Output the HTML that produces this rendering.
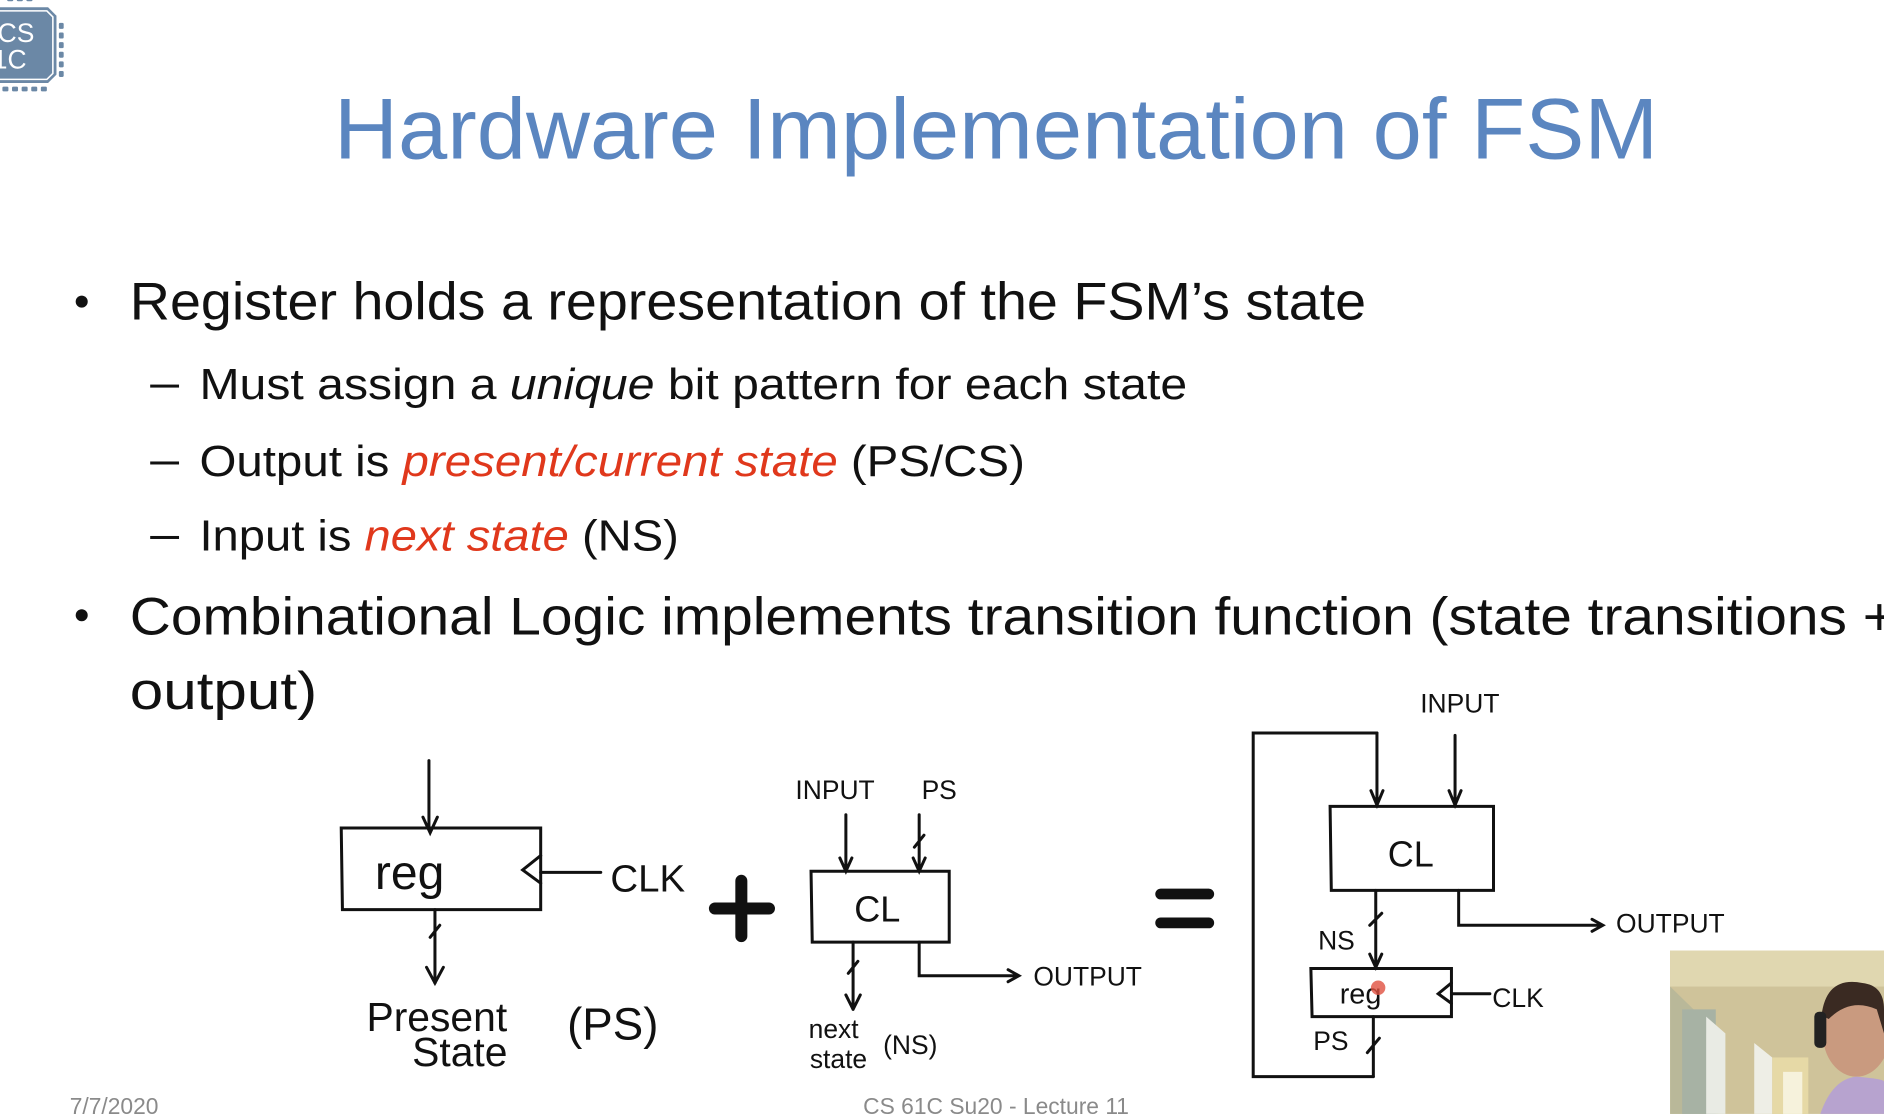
<!DOCTYPE html>
<html><head><meta charset="utf-8"><style>
html,body{margin:0;padding:0;background:#fff;overflow:hidden}
svg{display:block}
text{font-family:"Liberation Sans",sans-serif}
.h{font-family:"Liberation Sans",sans-serif;fill:#111}
</style></head><body>
<svg width="1884" height="1114" viewBox="0 0 1568 927" xmlns="http://www.w3.org/2000/svg">
<rect width="1568" height="927" fill="#fff"/>
<!-- logo -->
<g fill="#6b88a6">
<path d="M-5 6 H40 L47 13 V62 L40 69 H-5 Z"/>
<rect x="6" y="-3" width="5" height="4" rx="1"/><rect x="14" y="-3" width="5" height="4" rx="1"/><rect x="22" y="-3" width="5" height="4" rx="1"/>
<rect x="2" y="72" width="5" height="4" rx="1"/><rect x="10" y="72" width="5" height="4" rx="1"/><rect x="18" y="72" width="5" height="4" rx="1"/><rect x="26" y="72" width="5" height="4" rx="1"/><rect x="34" y="72" width="5" height="4" rx="1"/>
<rect x="49" y="19" width="4" height="5" rx="1"/><rect x="49" y="27" width="4" height="5" rx="1"/><rect x="49" y="35" width="4" height="5" rx="1"/><rect x="49" y="43" width="4" height="5" rx="1"/><rect x="49" y="51" width="4" height="5" rx="1"/><rect x="49" y="59" width="4" height="5" rx="1"/>
</g>
<path d="M-5 9 H39 L44 14 V61 L39 66 H-5" fill="none" stroke="#fff" stroke-width="1.3"/>
<text x="-2" y="35" font-family="Liberation Mono,monospace" font-size="22" fill="#fff">CS</text>
<text x="-6" y="57" font-family="Liberation Mono,monospace" font-size="22" fill="#fff">1C</text>
<!-- title -->
<text x="278" y="132" font-size="72" fill="#5b86c0" textLength="1102" lengthAdjust="spacingAndGlyphs">Hardware Implementation of FSM</text>
<!-- bullets -->
<g fill="#111">
<circle cx="68" cy="251" r="5"/>
<text x="108" y="266" font-size="44" textLength="1029" lengthAdjust="spacingAndGlyphs">Register holds a representation of the FSM’s state</text>
<rect x="125" y="320" width="24" height="2.5"/>
<text x="166" y="332" font-size="36" textLength="822" lengthAdjust="spacingAndGlyphs">Must assign a <tspan font-style="italic">unique</tspan> bit pattern for each state</text>
<rect x="125" y="384" width="24" height="2.5"/>
<text x="166" y="396" font-size="36" textLength="687" lengthAdjust="spacingAndGlyphs">Output is <tspan font-style="italic" fill="#e0381c">present/current state</tspan> (PS/CS)</text>
<rect x="125" y="446" width="24" height="2.5"/>
<text x="166" y="458" font-size="36" textLength="399" lengthAdjust="spacingAndGlyphs">Input is <tspan font-style="italic" fill="#e0381c">next state</tspan> (NS)</text>
<circle cx="68" cy="512" r="5"/>
<text x="108" y="528" font-size="44" textLength="1470" lengthAdjust="spacingAndGlyphs">Combinational Logic implements transition function (state transitions +</text>
<text x="108" y="590" font-size="44" textLength="156" lengthAdjust="spacingAndGlyphs">output)</text>
</g>
<!-- footer -->
<text x="58" y="927" font-size="19" fill="#8a8a8a">7/7/2020</text>
<text x="829" y="927" font-size="19" fill="#8a8a8a" text-anchor="middle">CS 61C Su20 - Lecture 11</text>
<!-- diagram 1 -->
<g stroke="#111" stroke-width="2.5" fill="none" stroke-linecap="round">
<path d="M357 633 V690"/><path d="M352 680 L358 693 L364 680"/>
<path d="M284 689 H450 V757 H285 Z"/>
<path d="M450 712 L435 724 L450 735"/><path d="M450 726 H500"/>
<path d="M362 757 V818"/><path d="M355 805 L362 818 L369 805"/><path d="M358 780 L366 770"/>
<!-- plus -->
<path d="M617 733 V779 M595 756 H640" stroke-width="10"/>
<!-- CL 1 -->
<path d="M704 678 V723 M699 714 L704 725 L709 714"/>
<path d="M765 678 V723 M760 714 L765 725 L770 714 M761 705 L769 695"/>
<path d="M675 725 H790 V784 H676 Z"/>
<path d="M710 784 V838 M704 828 L710 840 M716 828 L710 840 M706 810 L714 800"/>
<path d="M765 784 V812 H845 M839 807 L848 812 L839 817"/>
<!-- equals -->
<path d="M966 744 H1006 M966 768 H1006" stroke-width="9"/>
<!-- diagram 3 -->
<path d="M1211 612 V668 M1206 658 L1211 670 L1216 658"/>
<path d="M1146 610 H1043 V896 H1143"/>
<path d="M1146 610 V668 M1141 658 L1146 670 L1151 658"/>
<path d="M1107 671 H1243 V741 H1108 Z"/>
<path d="M1145 741 V803 M1140 794 L1145 805 L1150 794 M1140 770 L1150 760"/>
<path d="M1214 741 V770 H1332 M1325 765 L1334 770 L1325 775"/>
<path d="M1091 806 H1208 V846 H1092 Z"/>
<path d="M1208 818 L1197 827 L1208 835 M1208 827 H1240"/>
<path d="M1143 846 V896 M1138 876 L1148 864"/>
</g>
<g class="h">
<text x="312" y="740" font-size="40">reg</text>
<text x="508" y="742" font-size="32">CLK</text>
<text x="305" y="858" font-size="34">Present</text>
<text x="343" y="887" font-size="34">State</text>
<text x="472" y="865" font-size="38">(PS)</text>
<text x="662" y="665" font-size="22">INPUT</text>
<text x="767" y="665" font-size="22">PS</text>
<text x="711" y="767" font-size="30">CL</text>
<text x="860" y="820" font-size="22">OUTPUT</text>
<text x="673" y="864" font-size="22">next</text>
<text x="674" y="889" font-size="22">state</text>
<text x="735" y="877" font-size="22">(NS)</text>
<text x="1182" y="593" font-size="22">INPUT</text>
<text x="1155" y="721" font-size="30">CL</text>
<text x="1097" y="790" font-size="22">NS</text>
<text x="1345" y="776" font-size="22">OUTPUT</text>
<text x="1115" y="835" font-size="24">reg</text>
<text x="1242" y="838" font-size="22">CLK</text>
<text x="1093" y="874" font-size="22">PS</text>
</g>
<circle cx="1147" cy="822" r="6" fill="#e05040" opacity="0.8"/>
<!-- webcam -->
<g>
<rect x="1390" y="791" width="178" height="136" fill="#cfc39a"/>
<rect x="1390" y="791" width="178" height="30" fill="#e0d7b0"/>
<path d="M1390 821 L1430 860 V927 H1390 Z" fill="#b9b899"/>
<rect x="1400" y="840" width="28" height="87" fill="#a7b2a4"/>
<path d="M1420 846 L1436 860 V927 H1420 Z" fill="#e9ebe4"/>
<path d="M1460 868 L1475 880 V927 H1460 Z" fill="#eeeee6"/>
<rect x="1475" y="880" width="30" height="47" fill="#e6d9a6"/>
<rect x="1484" y="892" width="16" height="35" fill="#f6f2dc"/>
<ellipse cx="1545" cy="860" rx="28" ry="36" fill="#c99a7f"/>
<path d="M1516 845 Q1520 812 1550 818 Q1568 820 1568 840 V860 L1562 840 Q1540 830 1522 848 Z" fill="#3a2a22"/>
<rect x="1510" y="842" width="10" height="30" rx="4" fill="#222"/>
<path d="M1515 927 Q1525 898 1545 896 Q1568 898 1568 900 V927 Z" fill="#b7a3cf"/>
</g>
</svg>
</body></html>
